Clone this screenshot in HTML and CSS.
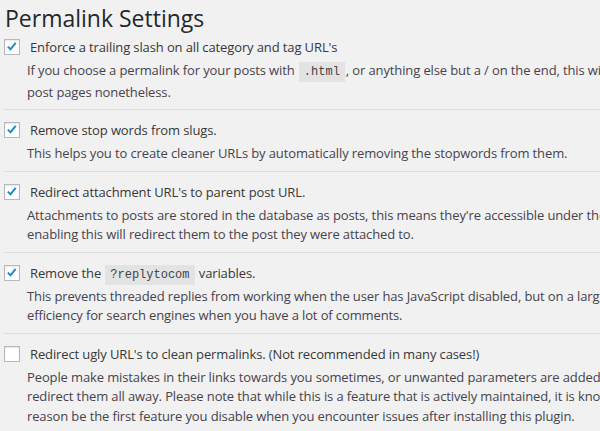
FILE: index.html
```html
<!DOCTYPE html>
<html>
<head>
<meta charset="utf-8">
<link rel="stylesheet" href="styles.css">
</head>
<body>
<div class="wrap">
  <h1 class="title">Permalink Settings</h1>
  <div class="option first">
    <label class="opt-label"><span class="cb checked"><svg viewBox="0 0 16 16" width="14" height="14"><path d="M3.2 7.6 L6.3 10.6 L12.2 3.4" fill="none" stroke="#1e8cbe" stroke-width="2.3"/></svg></span>Enforce a trailing slash on all category and tag URL's</label>
    <p class="desc">If you choose a permalink for your posts with <code>.html</code>, or anything else but a / on the end, this will force WordPress to add a trailing slash to non-post pages nonetheless.</p>
  </div>
  <div class="option">
    <label class="opt-label"><span class="cb checked"><svg viewBox="0 0 16 16" width="14" height="14"><path d="M3.2 7.6 L6.3 10.6 L12.2 3.4" fill="none" stroke="#1e8cbe" stroke-width="2.3"/></svg></span>Remove stop words from slugs.</label>
    <p class="desc">This helps you to create cleaner URLs by automatically removing the stopwords from them.</p>
  </div>
  <div class="option">
    <label class="opt-label"><span class="cb checked"><svg viewBox="0 0 16 16" width="14" height="14"><path d="M3.2 7.6 L6.3 10.6 L12.2 3.4" fill="none" stroke="#1e8cbe" stroke-width="2.3"/></svg></span>Redirect attachment URL's to parent post URL.</label>
    <p class="desc">Attachments to posts are stored in the database as posts, this means they're accessible under their own URL's if you do not redirect them, enabling this will redirect them to the post they were attached to.</p>
  </div>
  <div class="option">
    <label class="opt-label"><span class="cb checked"><svg viewBox="0 0 16 16" width="14" height="14"><path d="M3.2 7.6 L6.3 10.6 L12.2 3.4" fill="none" stroke="#1e8cbe" stroke-width="2.3"/></svg></span><span class="label-text">Remove the <code>?replytocom</code> variables.</span></label>
    <p class="desc">This prevents threaded replies from working when the user has JavaScript disabled, but on a large site can mean a <em>huge</em> improvement in crawl efficiency for search engines when you have a lot of comments.</p>
  </div>
  <div class="option last">
    <label class="opt-label"><span class="cb"></span>Redirect ugly URL's to clean permalinks. (Not recommended in many cases!)</label>
    <p class="desc">People make mistakes in their links towards you sometimes, or unwanted parameters are added to the end of your URLs, this allows you to redirect them all away. Please note that while this is a feature that is actively maintained, it is known to break several plugins, and should for that reason be the first feature you disable when you encounter issues after installing this plugin.</p>
  </div>
</div>
</body>
</html>
```

FILE: styles.css
```css
html, body {
  margin: 0;
  padding: 0;
  background: #f1f1f1;
}
body {
  width: 600px;
  height: 431px;
  overflow: hidden;
  font-family: "Open Sans", "Liberation Sans", sans-serif;
  font-size: 13px;
  color: #444;
}
.wrap {
  width: 886px;
  padding-left: 4px;
}
.title {
  margin: 0;
  padding: 7px 0 0 1px;
  font-size: 23px;
  font-weight: 400;
  line-height: 23px;
  color: #23282d;
}
.option {
  border-bottom: 1px solid #dddddd;
  padding: 8px 0 7px 0;
}
.option.first {
  padding-top: 5px;
}
.option.last {
  border-bottom: none;
}
.opt-label {
  display: flex;
  align-items: center;
  height: 24px;
  line-height: 24px;
  margin-bottom: 2px;
  color: #383838;
  letter-spacing: -0.12px;
}
.label-text {
  line-height: 24px;
}
.opt-label code {
  line-height: 1;
}
.cb {
  box-sizing: border-box;
  width: 16px;
  height: 16px;
  border: 1px solid #b4b9be;
  background: #fff;
  box-shadow: inset 0 1px 2px rgba(0,0,0,.1);
  margin-right: 10px;
  flex: none;
  display: flex;
  align-items: center;
  justify-content: center;
}
.cb svg {
  display: block;
}
.desc {
  margin: 0;
  padding-left: 23px;
  line-height: 19.5px;
  color: #47434d;
  letter-spacing: -0.12px;
}
code {
  font-family: "Liberation Mono", "DejaVu Sans Mono", monospace;
  font-size: 12px;
  letter-spacing: 0;
  background: #e3e3e3;
  padding: 3px 5px 3px;
  margin: 0 1px;
  color: #444;
}
```
